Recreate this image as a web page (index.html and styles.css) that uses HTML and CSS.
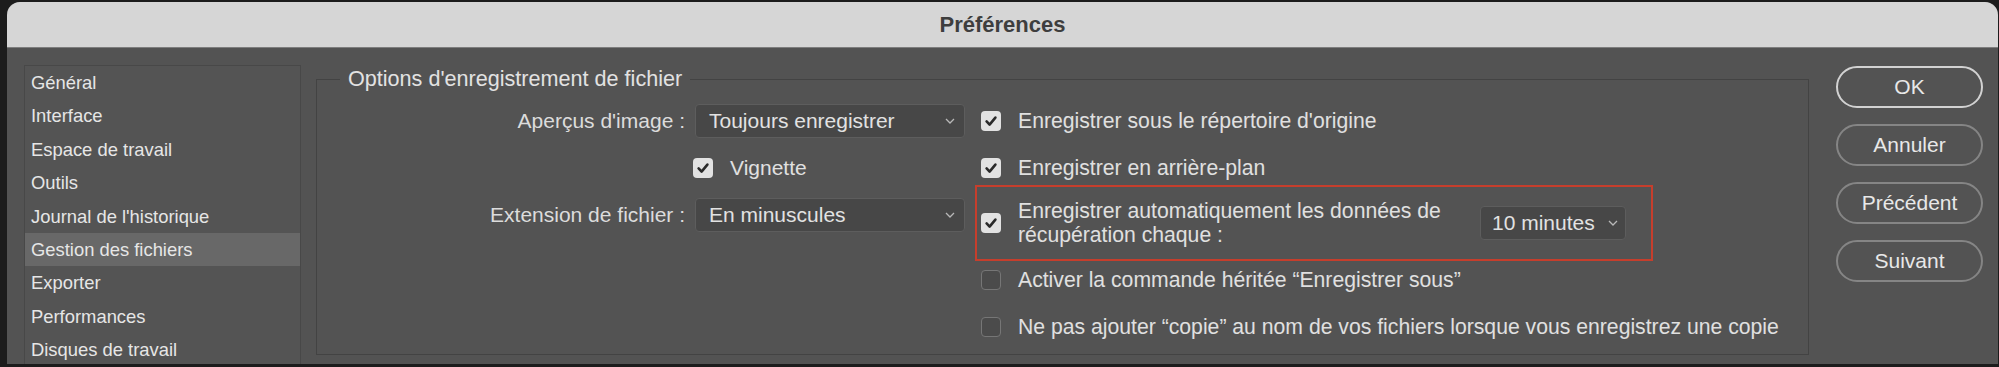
FILE: index.html
```html
<!DOCTYPE html>
<html lang="fr">
<head>
<meta charset="utf-8">
<title>Préférences</title>
<link rel="stylesheet" href="styles.css">
</head>
<body>
<div class="dialog">
  <div class="titlebar">Préférences</div>
  <div class="content">
    <ul class="sidebar">
      <li>Général</li>
      <li>Interface</li>
      <li>Espace de travail</li>
      <li>Outils</li>
      <li>Journal de l'historique</li>
      <li class="active">Gestion des fichiers</li>
      <li>Exporter</li>
      <li>Performances</li>
      <li>Disques de travail</li>
    </ul>
    <fieldset class="group">
      <legend>Options d'enregistrement de fichier</legend>
      <div class="group-body">
        <div class="left-grid">
          <span class="lbl">Aperçus d'image :</span>
          <div class="select"><span>Toujours enregistrer</span><svg class="chev" width="10" height="6" viewBox="0 0 10 6"><polyline points="1,1 5,5 9,1" fill="none" stroke="#b8b8b8" stroke-width="1.3"/></svg></div>
          <span></span>
          <div class="check-row vignette"><span class="cb on"><svg width="20" height="20" viewBox="0 0 20 20"><path d="M5.6 10.4 L8.6 13.6 L14.4 6.6" fill="none" stroke="#2a2a2a" stroke-width="2.6" stroke-linecap="round" stroke-linejoin="round"/></svg></span><span>Vignette</span></div>
          <span class="lbl">Extension de fichier :</span>
          <div class="select"><span>En minuscules</span><svg class="chev" width="10" height="6" viewBox="0 0 10 6"><polyline points="1,1 5,5 9,1" fill="none" stroke="#b8b8b8" stroke-width="1.3"/></svg></div>
        </div>
        <div class="right-col">
          <div class="opt"><span class="cb on"><svg width="20" height="20" viewBox="0 0 20 20"><path d="M5.6 10.4 L8.6 13.6 L14.4 6.6" fill="none" stroke="#2a2a2a" stroke-width="2.6" stroke-linecap="round" stroke-linejoin="round"/></svg></span><span>Enregistrer sous le répertoire d'origine</span></div>
          <div class="opt r2"><span class="cb on"><svg width="20" height="20" viewBox="0 0 20 20"><path d="M5.6 10.4 L8.6 13.6 L14.4 6.6" fill="none" stroke="#2a2a2a" stroke-width="2.6" stroke-linecap="round" stroke-linejoin="round"/></svg></span><span>Enregistrer en arrière-plan</span></div>
          <div class="opt autobox"><span class="cb on"><svg width="20" height="20" viewBox="0 0 20 20"><path d="M5.6 10.4 L8.6 13.6 L14.4 6.6" fill="none" stroke="#2a2a2a" stroke-width="2.6" stroke-linecap="round" stroke-linejoin="round"/></svg></span><span class="txt">Enregistrer automatiquement les données de<br>récupération chaque :</span><div class="select small"><span>10 minutes</span><svg class="chev" width="10" height="6" viewBox="0 0 10 6"><polyline points="1,1 5,5 9,1" fill="none" stroke="#b8b8b8" stroke-width="1.3"/></svg></div></div>
          <div class="opt r4"><span class="cb off"></span><span>Activer la commande héritée “Enregistrer sous”</span></div>
          <div class="opt r5"><span class="cb off"></span><span>Ne pas ajouter “copie” au nom de vos fichiers lorsque vous enregistrez une copie</span></div>
        </div>
      </div>
    </fieldset>
    <div class="buttons">
      <button class="btn default">OK</button>
      <button class="btn">Annuler</button>
      <button class="btn">Précédent</button>
      <button class="btn">Suivant</button>
    </div>
  </div>
</div>
</body>
</html>
```

FILE: styles.css
```css
html, body {
  margin: 0;
  padding: 0;
  height: 367px;
  overflow: hidden;
  background: #1c1c1c;
  font-family: "Liberation Sans", Arial, sans-serif;
}

.dialog {
  margin: 2px 1px 0 7px;
  height: 362px;
  background: #535353;
  border-radius: 13px 13px 0 0;
  overflow: hidden;
  display: flex;
  flex-direction: column;
}

.titlebar {
  flex: none;
  height: 45px;
  background: #d6d6d6;
  border-bottom: 1px solid #7e7e7e;
  display: flex;
  align-items: center;
  justify-content: center;
  font-weight: bold;
  font-size: 22px;
  color: #3e3e3e;
}

.content {
  flex: 1;
  min-height: 0;
  display: flex;
  padding: 17px 15px 0 17px;
}

.sidebar {
  list-style: none;
  margin: 0;
  padding: 0;
  flex: none;
  width: 277px;
  box-sizing: border-box;
  border: 1px solid #484848;
  border-bottom: none;
  background: #545454;
}

.sidebar li {
  height: 33.4px;
  line-height: 33.4px;
  padding-left: 6px;
  font-size: 18.4px;
  color: #e6e6e6;
  white-space: nowrap;
}

.sidebar li.active {
  background: #686868;
}

.group {
  flex: 1;
  min-width: 0;
  align-self: flex-start;
  margin: 2px 0 0 15px;
  height: 288px;
  box-sizing: border-box;
  border: 1px solid #434343;
  padding: 13px 0 0 0;
}

.group legend {
  margin-left: 23px;
  padding: 0 8px;
  font-size: 21.6px;
  line-height: 24px;
  color: #e2e2e2;
}

.group-body {
  display: flex;
  align-items: flex-start;
}

.left-grid {
  flex: none;
  width: 648px;
  display: grid;
  grid-template-columns: 1fr 270px;
  grid-template-rows: 34px 20px 34px;
  column-gap: 10px;
  row-gap: 20px;
  align-items: center;
}

.lbl {
  text-align: right;
  font-size: 21px;
  color: #dcdcdc;
  white-space: nowrap;
}

.select {
  height: 34px;
  box-sizing: border-box;
  background: #474747;
  border: 1px solid #5d5d5d;
  border-radius: 4px;
  display: flex;
  align-items: center;
  padding: 0 9px 0 13px;
  font-size: 21px;
  color: #e2e2e2;
  white-space: nowrap;
}

.select .chev {
  margin-left: auto;
  flex: none;
}

.select.small {
  flex: none;
  width: 146px;
  padding-left: 11px;
  padding-right: 7px;
}

.check-row {
  display: flex;
  align-items: center;
  font-size: 21px;
  color: #e0e0e0;
}

.vignette {
  margin-left: -2px;
}

.cb {
  flex: none;
  width: 20px;
  height: 20px;
  border-radius: 4px;
  box-sizing: border-box;
  margin-right: 17px;
  display: flex;
}

.cb.on {
  background: #e2e2e2;
}

.cb.off {
  background: #4b4b4b;
  border: 1.5px solid #767676;
}

.right-col {
  margin-left: 10px;
  padding-top: 5px;
  display: flex;
  flex-direction: column;
  align-items: flex-start;
}

.opt {
  height: 24px;
  display: flex;
  align-items: center;
  padding-left: 6px;
  font-size: 21.2px;
  color: #e0e0e0;
  white-space: nowrap;
}

.opt.r2 {
  margin-top: 23px;
}

.opt.autobox {
  margin-top: 5px;
  width: 678px;
  height: 76px;
  box-sizing: border-box;
  border: 2px solid #c63e2c;
  padding-left: 4px;
}

.autobox .txt {
  flex: none;
  width: 462px;
  line-height: 24px;
  white-space: nowrap;
}

.opt.r4 {
  margin-top: 7px;
}

.opt.r5 {
  margin-top: 23px;
}

.buttons {
  flex: none;
  width: 147px;
  margin-left: 27px;
  padding-top: 1px;
  display: flex;
  flex-direction: column;
  gap: 16px;
}

.btn {
  height: 42px;
  border-radius: 21px;
  border: 2px solid #858585;
  background: transparent;
  color: #e8e8e8;
  font-family: inherit;
  font-size: 21px;
  padding: 0;
}

.btn.default {
  border-color: #d2d2d2;
}
```
